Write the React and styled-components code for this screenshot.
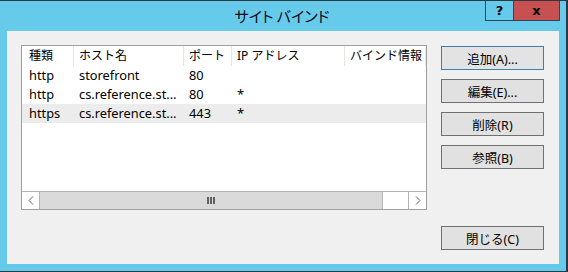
import React from "react";
import styled, { createGlobalStyle } from "styled-components";

const FONT = `"Noto Sans", "Noto Sans CJK JP", sans-serif`;

const GlobalStyle = createGlobalStyle`
  html, body {
    margin: 0;
    padding: 0;
    background: #66cbea;
  }
  body {
    font-family: ${FONT};
    font-size: 12px;
    color: #000;
  }
`;

const Window = styled.div`
  box-sizing: border-box;
  width: 568px;
  height: 272px;
  background: #66cbea;
  border-top: 1px solid #2b3a42;
  border-right: 2px solid #2b3a42;
  border-bottom: 1px solid #2b3a42;
  display: flex;
  flex-direction: column;
`;

const TitleBar = styled.div`
  height: 30px;
  display: flex;
  align-items: flex-start;
`;

const Title = styled.div`
  flex: 1;
  padding-left: 78px;
  text-align: center;
  font-family: "Noto Sans CJK JP", sans-serif;
  font-size: 15px;
  line-height: 30px;
  color: #0b0b1a;
  font-feature-settings: "palt";
`;

const CaptionButton = styled.div`
  box-sizing: border-box;
  width: ${(p) => p.$w}px;
  height: 20px;
  border: 1px solid #2d4655;
  border-top: none;
  margin-left: -1px;
  background: ${(p) => (p.$danger ? "#c75050" : "transparent")};
  display: flex;
  align-items: center;
  justify-content: center;
  font-family: "DejaVu Sans", sans-serif;
  font-weight: bold;
  font-size: 13px;
  color: #000;
`;

const CaptionGroup = styled.div`
  display: flex;
  margin-right: 6px;
`;

const Client = styled.div`
  box-sizing: border-box;
  margin: 0 7px;
  height: 233px;
  background: #f0f0f0;
  padding: 14px;
  display: flex;
  gap: 14px;
`;

const ListView = styled.div`
  box-sizing: border-box;
  width: 406px;
  height: 165px;
  border: 1px solid #a0a0a0;
  background: #fff;
  display: flex;
  flex-direction: column;
`;

const HEAD_COLS = "52px 110px 48px 113px 81px";
const ROW_COLS = "47px 110px 48px 113px 81px";

const HeaderRow = styled.div`
  display: grid;
  grid-template-columns: ${HEAD_COLS};
  height: 20px;
`;

const HeaderCell = styled.div`
  padding-left: ${(p) => (p.$first ? 7 : 5)}px;
  border-right: 1px solid #e5e5e5;
  line-height: 19px;
  white-space: nowrap;
  overflow: hidden;
`;

const Row = styled.div`
  display: grid;
  grid-template-columns: ${ROW_COLS};
  height: 19px;
  line-height: 19px;
  padding-left: 5px;
  background: ${(p) => (p.$selected ? "#ececec" : "transparent")};
`;

const Cell = styled.div`
  padding-left: ${(p) => (p.$first ? 2 : 5)}px;
  white-space: nowrap;
  overflow: hidden;
  font-size: ${(p) => (p.$star ? 13 : 12.8)}px;
`;

const Spacer = styled.div`
  flex: 1;
`;

const ScrollBar = styled.div`
  box-sizing: border-box;
  height: 18px;
  border-top: 1px solid #b4b4b4;
  display: flex;
`;

const ArrowButton = styled.div`
  box-sizing: border-box;
  width: 18px;
  background: #fff;
  ${(p) => (p.$side === "left" ? "border-right" : "border-left")}: 1px solid #b4b4b4;
  display: flex;
  align-items: center;
  justify-content: center;
`;

const Thumb = styled.div`
  box-sizing: border-box;
  width: 343px;
  background: #dadada;
  border-right: 1px solid #b4b4b4;
  display: flex;
  align-items: center;
  justify-content: center;
  gap: 1px;
`;

const Grip = styled.span`
  width: 2px;
  height: 7px;
  background: #606060;
`;

const Track = styled.div`
  flex: 1;
  background: #fff;
`;

const ButtonColumn = styled.div`
  display: flex;
  flex-direction: column;
  gap: 9px;
  padding-top: 1px;
`;

const Button = styled.div`
  box-sizing: border-box;
  width: 103px;
  height: 24px;
  border: 1px solid ${(p) => (p.$focused ? "#3c7fb1" : "#707070")};
  background: ${(p) => (p.$focused ? "#e3e3e3" : "#e1e1e1")};
  display: flex;
  align-items: center;
  justify-content: center;
  font-family: ${FONT};
  font-size: 12.5px;
  color: #000;
  margin-top: ${(p) => (p.$bottom ? "auto" : "0")};
`;

const Chevron = ({ dir }) => (
  <svg width="6" height="9" viewBox="0 0 6 9">
    <polyline
      points={dir === "left" ? "5,0.5 1,4.5 5,8.5" : "1,0.5 5,4.5 1,8.5"}
      fill="none"
      stroke="#606060"
      strokeWidth="1"
    />
  </svg>
);

const columns = ["種類", "ホスト名", "ポート", "IP アドレス", "バインド情報"];

const bindings = [
  { type: "http", host: "storefront", port: "80", ip: "" },
  { type: "http", host: "cs.reference.st...", port: "80", ip: "*" },
  { type: "https", host: "cs.reference.st...", port: "443", ip: "*", selected: true },
];

const App = () => {
  return (
    <>
      <GlobalStyle />
      <Window>
        <TitleBar>
          <Title>サイト バインド</Title>
          <CaptionGroup>
            <CaptionButton $w={29}>?</CaptionButton>
            <CaptionButton $w={47} $danger>x</CaptionButton>
          </CaptionGroup>
        </TitleBar>
        <Client>
          <ListView>
            <HeaderRow>
              {columns.map((c, i) => (
                <HeaderCell key={c} $first={i === 0}>{c}</HeaderCell>
              ))}
            </HeaderRow>
            {bindings.map((b, i) => (
              <Row key={i} $selected={b.selected}>
                <Cell $first>{b.type}</Cell>
                <Cell>{b.host}</Cell>
                <Cell>{b.port}</Cell>
                <Cell $star>{b.ip}</Cell>
                <Cell></Cell>
              </Row>
            ))}
            <Spacer />
            <ScrollBar>
              <ArrowButton $side="left"><Chevron dir="left" /></ArrowButton>
              <Thumb>
                <Grip />
                <Grip />
                <Grip />
              </Thumb>
              <Track />
              <ArrowButton $side="right"><Chevron dir="right" /></ArrowButton>
            </ScrollBar>
          </ListView>
          <ButtonColumn>
            <Button $focused>追加(A)...</Button>
            <Button>編集(E)...</Button>
            <Button>削除(R)</Button>
            <Button>参照(B)</Button>
            <Button $bottom>閉じる(C)</Button>
          </ButtonColumn>
        </Client>
      </Window>
    </>
  );
};

export default App;
